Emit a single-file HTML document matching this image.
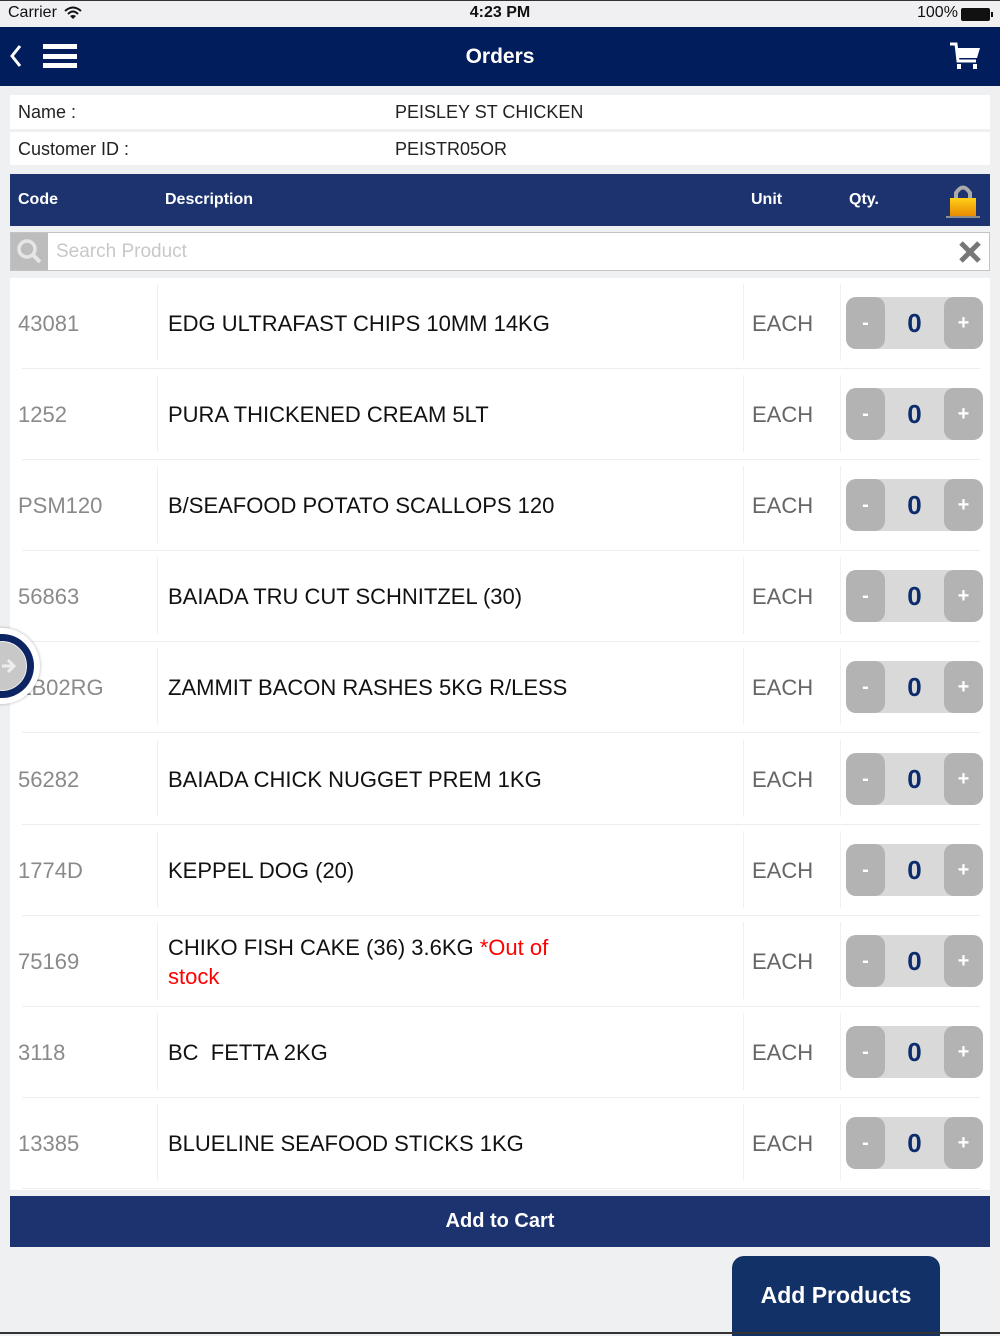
<!DOCTYPE html>
<html><head><meta charset="utf-8"><style>
*{margin:0;padding:0;box-sizing:border-box}
body{width:1000px;height:1334px;background:#eff0f2;font-family:"Liberation Sans",sans-serif;position:relative;overflow:hidden}
.a{position:absolute}
.row{position:absolute;left:10px;width:980px;height:91px;background:#fff}
.row .sep{position:absolute;left:12px;right:10px;bottom:0;height:1px;background:#eeeeee}
.row .v1,.row .v2,.row .v3{position:absolute;top:6px;bottom:8px;width:1px;background:#f0f0f0}
.v1{left:147px}.v2{left:733px}.v3{left:830px}
.code{position:absolute;left:8px;top:0;height:91px;line-height:91px;font-size:22px;color:#8a8a8a}
.desc{position:absolute;left:158px;top:0;height:91px;display:flex;align-items:center;font-size:22px;color:#111;line-height:29px}
.unit{position:absolute;left:742px;top:0;height:91px;line-height:91px;font-size:22px;color:#666}
.st{position:absolute;left:836px;top:19px;width:137px;height:52px;border-radius:10px;background:#d9d9d9}
.st .m,.st .p{position:absolute;top:0;width:39px;height:52px;border-radius:10px;background:#b3b3b3;color:#fff;font-size:20px;font-weight:bold;text-align:center;line-height:52px}
.st .m{left:0}.st .p{right:0}
.st .n{position:absolute;left:39px;right:39px;top:0;line-height:52px;text-align:center;font-size:26px;font-weight:bold;color:#0d2c6b}
</style></head><body>
<div class="a" style="left:0;top:0;width:1000px;height:27px;background:#f0f0f2;border-top:1px solid #333"></div>
<div class="a" style="left:8px;top:4px;font-size:16px;color:#111">Carrier</div>
<svg class="a" style="left:64px;top:6px" width="18" height="14" viewBox="0 0 18 14"><path d="M1 5 Q9 -2 17 5" stroke="#111" stroke-width="2" fill="none"/><path d="M4 8 Q9 3 14 8" stroke="#111" stroke-width="2" fill="none"/><path d="M9 13 L6 10 Q9 8 12 10 Z" fill="#111"/></svg>
<div class="a" style="left:0;width:1000px;top:4px;text-align:center;font-size:16px;font-weight:bold;color:#111">4:23 PM</div>
<div class="a" style="left:917px;top:4px;font-size:16px;color:#111">100%</div>
<div class="a" style="left:961px;top:8px;width:29px;height:13px;background:#111;border-radius:2px"></div>
<div class="a" style="left:991px;top:12px;width:2px;height:5px;background:#111"></div>

<div class="a" style="left:0;top:27px;width:1000px;height:59px;background:#011d5c"></div>
<svg class="a" style="left:8px;top:44px" width="16" height="24" viewBox="0 0 16 24"><path d="M12 2 L4 12 L12 22" stroke="#fff" stroke-width="3" fill="none"/></svg>
<div class="a" style="left:43px;top:44px;width:34px;height:5px;background:#fff"></div>
<div class="a" style="left:43px;top:54px;width:34px;height:5px;background:#fff"></div>
<div class="a" style="left:43px;top:63px;width:34px;height:5px;background:#fff"></div>
<div class="a" style="left:0;width:1000px;top:45px;text-align:center;font-size:21px;font-weight:bold;color:#fff">Orders</div>
<svg class="a" style="left:948px;top:41px" width="34" height="30" viewBox="0 0 34 30"><path d="M2 3 L8 3 L10 20 L28 20" stroke="#fff" stroke-width="3" fill="none"/><path d="M9 7 L32 7 L29 17 L10 17 Z" fill="#fff"/><rect x="9" y="23" width="4" height="5" fill="#fff"/><rect x="25" y="23" width="4" height="5" fill="#fff"/></svg>

<div class="a" style="left:10px;top:95px;width:980px;height:34px;background:#fff"></div>
<div class="a" style="left:10px;top:132px;width:980px;height:33px;background:#fff"></div>
<div class="a" style="left:18px;top:102px;font-size:18px;color:#222">Name :</div>
<div class="a" style="left:395px;top:102px;font-size:18px;color:#222">PEISLEY ST CHICKEN</div>
<div class="a" style="left:18px;top:139px;font-size:18px;color:#222">Customer ID :</div>
<div class="a" style="left:395px;top:139px;font-size:18px;color:#222">PEISTR05OR</div>

<div class="a" style="left:10px;top:174px;width:980px;height:52px;background:#1c3370"></div>
<div class="a" style="left:18px;top:191px;font-size:16px;font-weight:bold;color:#fff">Code</div>
<div class="a" style="left:165px;top:191px;font-size:16px;font-weight:bold;color:#fff">Description</div>
<div class="a" style="left:751px;top:191px;font-size:16px;font-weight:bold;color:#fff">Unit</div>
<div class="a" style="left:849px;top:191px;font-size:16px;font-weight:bold;color:#fff">Qty.</div>
<svg class="a" style="left:944px;top:183px" width="38" height="36" viewBox="0 0 38 36"><path d="M12 16 V10 Q19 -1 26 10 V16" stroke="#aaa" stroke-width="4" fill="none"/><defs><linearGradient id="g" x1="0" y1="0" x2="0" y2="1"><stop offset="0" stop-color="#ffd01a"/><stop offset="1" stop-color="#e88a00"/></linearGradient></defs><rect x="6" y="15" width="26" height="18" fill="url(#g)"/><rect x="2" y="33" width="34" height="2" fill="#8c8c8c"/></svg>

<div class="a" style="left:10px;top:232px;width:980px;height:39px;background:#fff;border:1px solid #c4c4c4"></div>
<div class="a" style="left:11px;top:233px;width:37px;height:37px;background:#bdbdbd"></div>
<svg class="a" style="left:15px;top:237px" width="30" height="30" viewBox="0 0 30 30"><circle cx="12" cy="12" r="8" stroke="#e6e6e6" stroke-width="3.5" fill="none"/><path d="M18 18 L25 25" stroke="#e6e6e6" stroke-width="4"/></svg>
<div class="a" style="left:56px;top:241px;font-size:19px;color:#c8c8c8">Search Product</div>
<svg class="a" style="left:958px;top:240px" width="24" height="24" viewBox="0 0 24 24"><path d="M3 3 L21 21 M21 3 L3 21" stroke="#777" stroke-width="5"/></svg>

<div class="a" style="left:10px;top:278px;width:980px;height:912px;background:#fff"></div>

<div class="row" style="top:278px"><div class="v1"></div><div class="v2"></div><div class="v3"></div><div class="code">43081</div><div class="desc">EDG ULTRAFAST CHIPS 10MM 14KG</div><div class="unit">EACH</div><div class="st"><div class="m">-</div><div class="n">0</div><div class="p">+</div></div><div class="sep"></div></div>
<div class="row" style="top:369px"><div class="v1"></div><div class="v2"></div><div class="v3"></div><div class="code">1252</div><div class="desc">PURA THICKENED CREAM 5LT</div><div class="unit">EACH</div><div class="st"><div class="m">-</div><div class="n">0</div><div class="p">+</div></div><div class="sep"></div></div>
<div class="row" style="top:460px"><div class="v1"></div><div class="v2"></div><div class="v3"></div><div class="code">PSM120</div><div class="desc">B/SEAFOOD POTATO SCALLOPS 120</div><div class="unit">EACH</div><div class="st"><div class="m">-</div><div class="n">0</div><div class="p">+</div></div><div class="sep"></div></div>
<div class="row" style="top:551px"><div class="v1"></div><div class="v2"></div><div class="v3"></div><div class="code">56863</div><div class="desc">BAIADA TRU CUT SCHNITZEL (30)</div><div class="unit">EACH</div><div class="st"><div class="m">-</div><div class="n">0</div><div class="p">+</div></div><div class="sep"></div></div>
<div class="row" style="top:642px"><div class="v1"></div><div class="v2"></div><div class="v3"></div><div class="code">ZB02RG</div><div class="desc">ZAMMIT BACON RASHES 5KG R/LESS</div><div class="unit">EACH</div><div class="st"><div class="m">-</div><div class="n">0</div><div class="p">+</div></div><div class="sep"></div></div>
<div class="row" style="top:734px"><div class="v1"></div><div class="v2"></div><div class="v3"></div><div class="code">56282</div><div class="desc">BAIADA CHICK NUGGET PREM 1KG</div><div class="unit">EACH</div><div class="st"><div class="m">-</div><div class="n">0</div><div class="p">+</div></div><div class="sep"></div></div>
<div class="row" style="top:825px"><div class="v1"></div><div class="v2"></div><div class="v3"></div><div class="code">1774D</div><div class="desc">KEPPEL DOG (20)</div><div class="unit">EACH</div><div class="st"><div class="m">-</div><div class="n">0</div><div class="p">+</div></div><div class="sep"></div></div>
<div class="row" style="top:916px"><div class="v1"></div><div class="v2"></div><div class="v3"></div><div class="code">75169</div><div class="desc"><div>CHIKO FISH CAKE (36) 3.6KG <span style="color:#f00">*Out of</span><br><span style="color:#f00">stock</span></div></div><div class="unit">EACH</div><div class="st"><div class="m">-</div><div class="n">0</div><div class="p">+</div></div><div class="sep"></div></div>
<div class="row" style="top:1007px"><div class="v1"></div><div class="v2"></div><div class="v3"></div><div class="code">3118</div><div class="desc">BC&nbsp; FETTA 2KG</div><div class="unit">EACH</div><div class="st"><div class="m">-</div><div class="n">0</div><div class="p">+</div></div><div class="sep"></div></div>
<div class="row" style="top:1098px"><div class="v1"></div><div class="v2"></div><div class="v3"></div><div class="code">13385</div><div class="desc">BLUELINE SEAFOOD STICKS 1KG</div><div class="unit">EACH</div><div class="st"><div class="m">-</div><div class="n">0</div><div class="p">+</div></div><div class="sep"></div></div>

<div class="a" style="left:-36px;top:628px;width:76px;height:76px;border-radius:50%;background:#fff;box-shadow:0 0 3px rgba(0,0,0,.3)"></div>
<div class="a" style="left:-30px;top:634px;width:64px;height:64px;border-radius:50%;background:#0d2463"></div>
<div class="a" style="left:-23px;top:641px;width:50px;height:50px;border-radius:50%;background:#c8c8c8;border:1px solid #eee"></div>
<svg class="a" style="left:0;top:656px" width="18" height="20" viewBox="0 0 18 20"><path d="M2 10 H14 M8 4 L14 10 L8 16" stroke="#eee" stroke-width="3" fill="none"/></svg>

<div class="a" style="left:10px;top:1196px;width:980px;height:51px;background:#1c3370;color:#fff;font-size:20px;font-weight:bold;text-align:center;line-height:51px">Add to Cart</div>
<div class="a" style="left:732px;top:1256px;width:208px;height:80px;background:#123166;border-radius:12px 12px 0 0;color:#fff;font-size:23px;font-weight:bold;text-align:center;line-height:78px">Add Products</div>
<div class="a" style="left:0;top:1332px;width:1000px;height:2px;background:#333"></div>
</body></html>
